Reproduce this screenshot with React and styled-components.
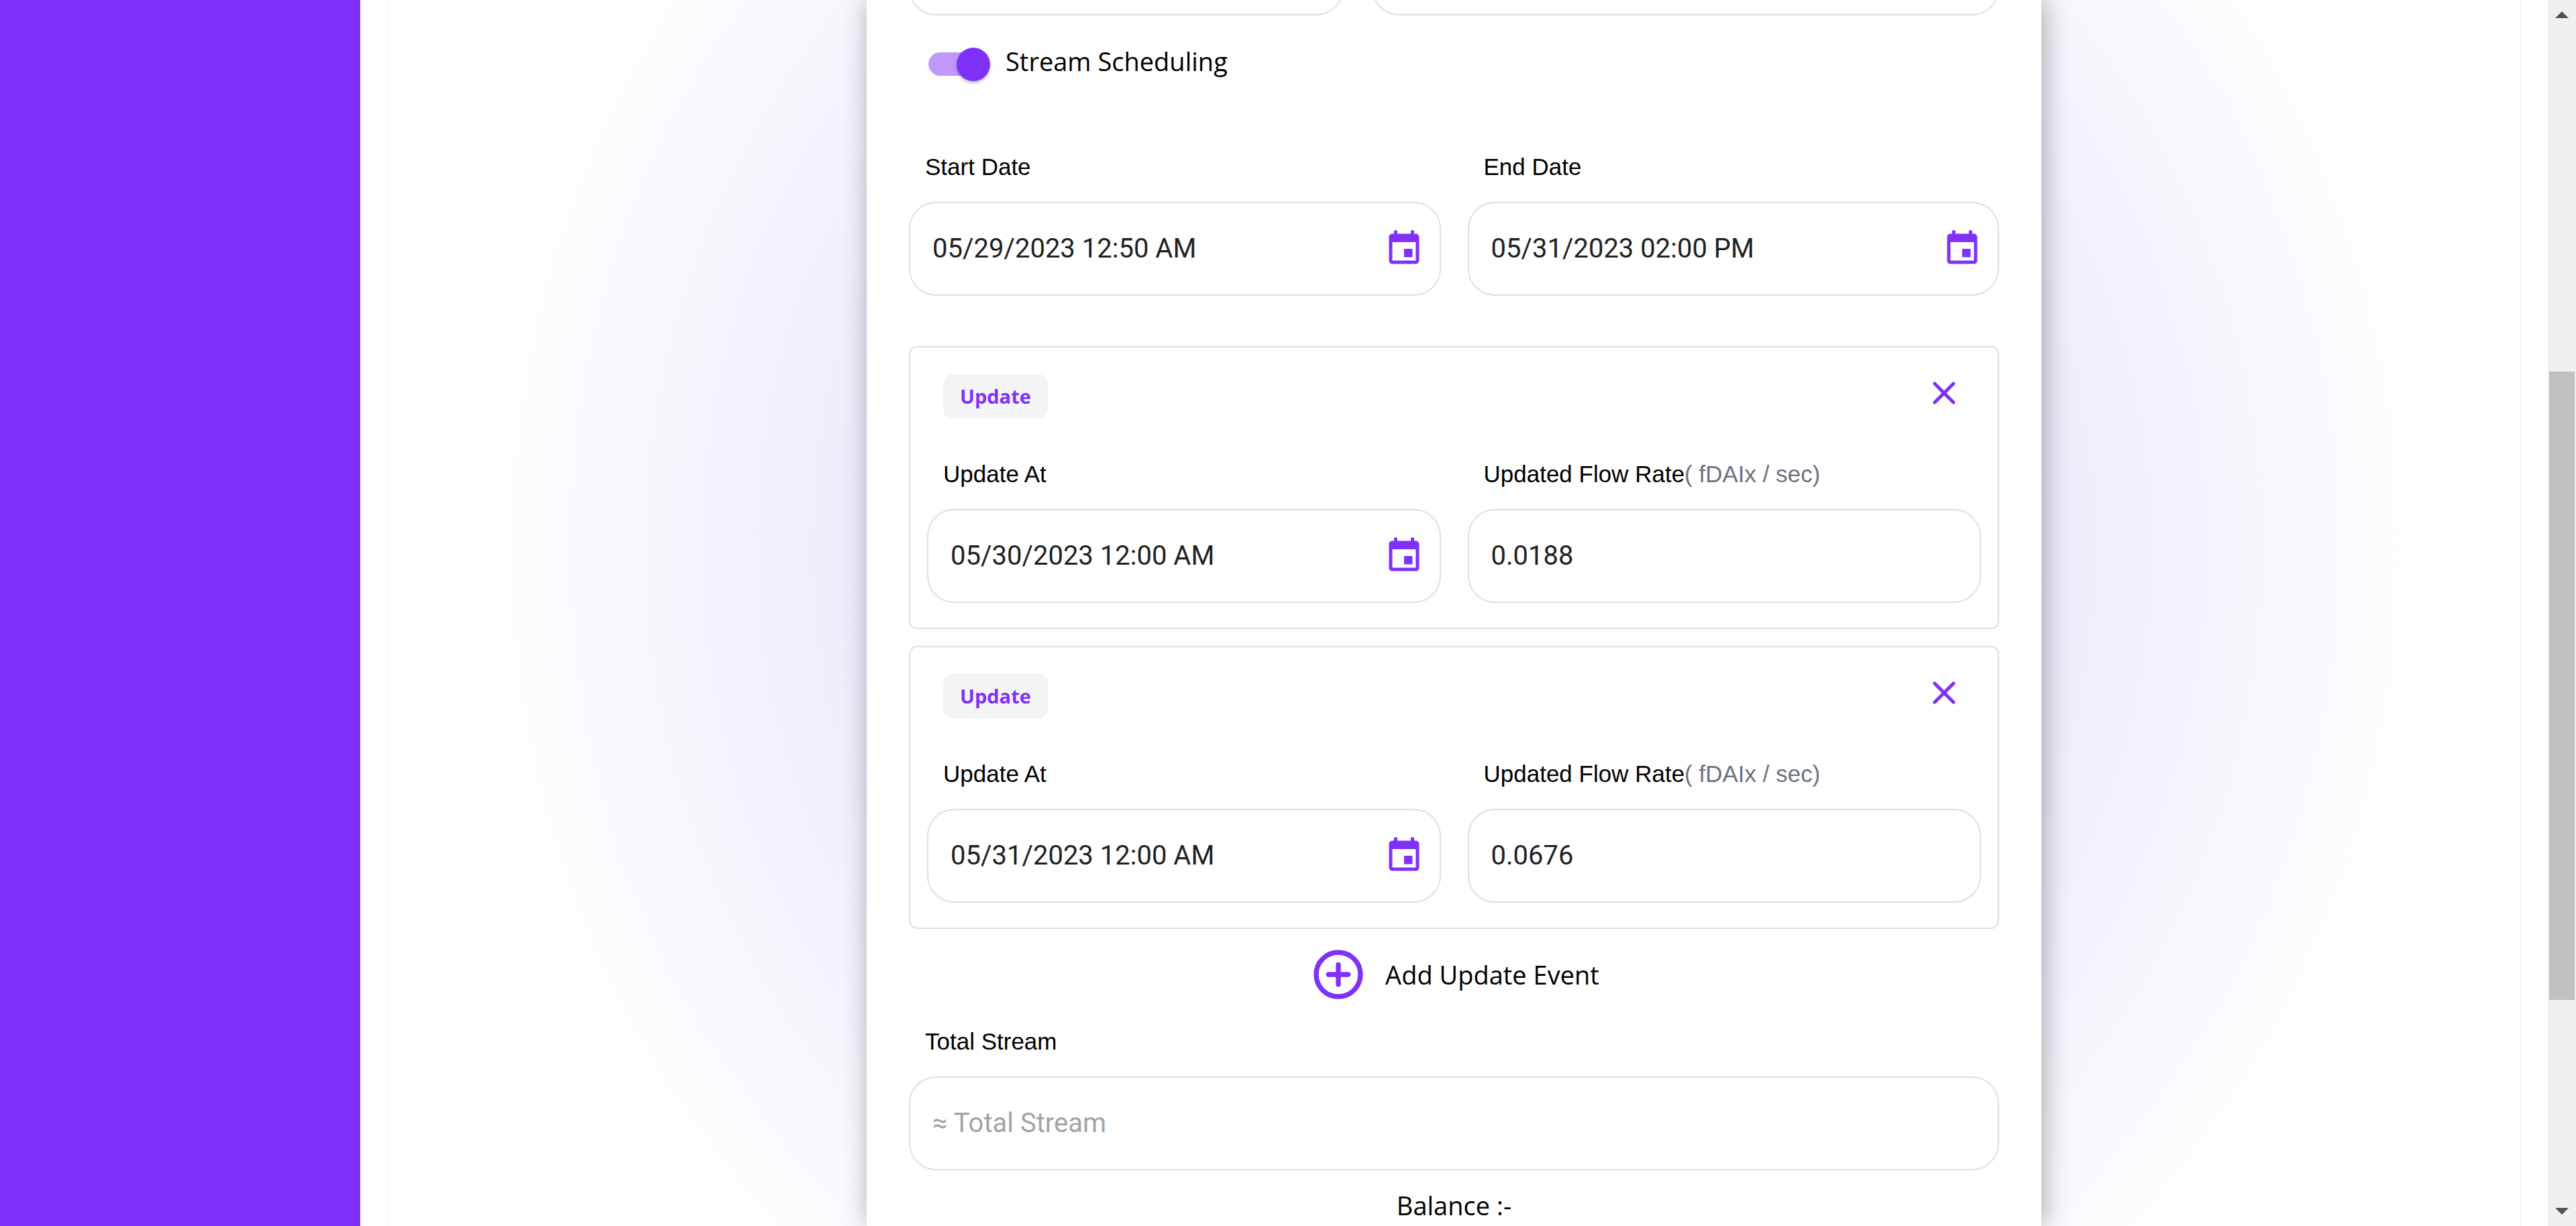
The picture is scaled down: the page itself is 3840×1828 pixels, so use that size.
import React from "react";
import styled, { createGlobalStyle } from "styled-components";

const purple = "#7f31fa";
const line = "#e0e0e0";
const sans = `"Open Sans", "Noto Sans", sans-serif`;

const GlobalStyle = createGlobalStyle`
  *, *::before, *::after { box-sizing: border-box; }
  html, body { margin: 0; background: #fff; }
  body { font-family: ${sans}; color: #000; }
  button, input { font: inherit; }
`;

const Page = styled.div`
  display: flex;
  height: 100vh;
  overflow: hidden;
`;

const Sidebar = styled.nav`
  flex: 0 0 537px;
  background: ${purple};
`;

const Main = styled.main`
  flex: 1;
  min-width: 0;
  display: flex;
  justify-content: center;
  margin: 0 40px;
  border: solid #f5f5f5;
  border-width: 0 2px;
  background: radial-gradient(47% 1540px at 50% 816px, #d4d4f7 0%, #ffffff 100%);
`;

const Card = styled.form`
  width: 100%;
  max-width: 1751px;
  display: flex;
  flex-direction: column;
  padding: 0 63px;
  background: #fff;
  box-shadow: 4px 0 38px rgba(0, 0, 0, 0.32);
`;

/* Lower edge of the row that is scrolled out above the viewport. */
const ScrolledRow = styled.div`
  display: grid;
  grid-template-columns: 648fr 934fr;
  grid-template-rows: 23px;
  gap: 42px;
  align-items: end;
  height: 23px;
`;

const Columns = styled.div`
  display: grid;
  grid-template-columns: 1fr 1fr;
  gap: 40px;
`;

const Body = styled.span`
  font-size: 38px;
  line-height: 40px;
`;

const SwitchRow = styled.label`
  display: flex;
  align-items: flex-start;
  gap: 23px;
  margin: 48px 0 108px;
  padding-left: 29px;
`;

const Switch = styled.input`
  appearance: none;
  position: relative;
  width: 92px;
  height: 50px;
  margin: 0;

  &::before {
    content: "";
    position: absolute;
    top: 7px;
    left: 0;
    width: 85px;
    height: 35px;
    border-radius: 18px;
    background: ${purple};
    opacity: 0.5;
  }

  &::after {
    content: "";
    position: absolute;
    top: 0;
    right: 0;
    width: 50px;
    height: 50px;
    border-radius: 50%;
    background: ${purple};
    box-shadow: 0 3px 4px rgba(0, 0, 0, 0.25);
  }
`;

const FieldBox = styled.div`
  display: flex;
  flex-direction: column;
  gap: 32px;
  min-width: 0;
`;

const FieldLabel = styled.label`
  padding-left: 24px;
  font-family: "Liberation Sans", Arial, sans-serif;
  font-size: 35px;
  line-height: 40px;
`;

const Unit = styled.span`
  color: #6b7280;
`;

const InputShell = styled.div`
  display: flex;
  align-items: center;
  height: 140px;
  padding: 0 23px 0 33px;
  border: 2px solid ${line};
  border-radius: 40px;
  background: #fff;
`;

const TextInput = styled.input`
  flex: 1;
  min-width: 0;
  width: 100%;
  padding: 0;
  border: 0;
  outline: 0;
  background: transparent;
  color: #212121;
  font-family: Roboto, sans-serif;
  font-size: 40px;
  line-height: 58px;

  &::placeholder {
    color: #a3a3a3;
    opacity: 1;
  }
`;

const IconButton = styled.button`
  display: flex;
  flex: none;
  padding: 0;
  border: 0;
  background: none;
  color: ${purple};
`;

const Events = styled.div`
  display: flex;
  flex-direction: column;
  gap: 25px;
  margin: 75px 0 24px;
`;

const EventCard = styled.section`
  padding: 40px 25px 37px;
  border: 2px solid ${line};
  border-radius: 12px;
`;

const EventHeader = styled.header`
  display: flex;
  align-items: flex-start;
  justify-content: space-between;
  margin-bottom: 63px;
  padding: 0 27px 0 24px;
`;

const Badge = styled.span`
  padding: 13px 25px;
  border-radius: 14px;
  background: #f3f4f6;
  color: ${purple};
  font-size: 29px;
  font-weight: 700;
  line-height: 40px;
`;

const AddButton = styled.button`
  display: flex;
  align-items: center;
  align-self: center;
  gap: 26px;
  margin-bottom: 36px;
  padding: 0;
  border: 0;
  background: none;
  color: #000;

  svg {
    color: ${purple};
  }
`;

const Balance = styled(Body).attrs({ as: "p" })`
  margin: 32px 0 0;
  text-align: center;
`;

const Scrollbar = styled.div`
  flex: 0 0 42px;
  display: grid;
  grid-template-rows: 42px 512fr 937fr 295fr 42px;
  background: #f0f0f0;
`;

const Thumb = styled.div`
  grid-row: 3;
  margin: 0 2px;
  background: #c1c1c1;
`;

const Arrow = styled.svg`
  grid-row: ${(p) => (p.$down ? 5 : 1)};
  display: block;
  width: 42px;
  height: 42px;
  fill: #505050;
`;

const CalendarIcon = () => (
  <svg width="60" height="60" viewBox="0 0 24 24" fill="currentColor" aria-hidden="true">
    <path d="M17 12h-5v5h5v-5zM16 1v2H8V1H6v2H5c-1.11 0-1.99.9-1.99 2L3 19c0 1.1.89 2 2 2h14c1.1 0 2-.9 2-2V5c0-1.1-.9-2-2-2h-1V1h-2zm3 18H5V8h14v11z" />
  </svg>
);

const CloseIcon = () => (
  <svg width="56" height="56" viewBox="0 0 24 24" fill="none" stroke="currentColor" strokeWidth="2.2" strokeLinecap="round" aria-hidden="true">
    <path d="M6 6l12 12M18 6L6 18" />
  </svg>
);

const PlusIcon = () => (
  <svg width="88" height="88" viewBox="0 0 24 24" fill="none" stroke="currentColor" strokeWidth="2" strokeLinecap="round" aria-hidden="true">
    <circle cx="12" cy="12" r="9" />
    <path d="M8 12h8M12 8v8" />
  </svg>
);

function Field({ id, label, unit, date, ...input }) {
  return (
    <FieldBox>
      <FieldLabel htmlFor={id}>
        {label}
        {unit && <Unit>{unit}</Unit>}
      </FieldLabel>
      <InputShell>
        <TextInput id={id} type="text" {...input} />
        {date && (
          <IconButton type="button" aria-label="Choose date">
            <CalendarIcon />
          </IconButton>
        )}
      </InputShell>
    </FieldBox>
  );
}

const events = [
  { at: "05/30/2023 12:00 AM", rate: "0.0188" },
  { at: "05/31/2023 12:00 AM", rate: "0.0676" },
];

export default function App() {
  return (
    <>
      <GlobalStyle />
      <Page>
        <Sidebar />
        <Main>
          <Card>
            <ScrolledRow>
              <InputShell />
              <InputShell />
            </ScrolledRow>
            <SwitchRow>
              <Switch type="checkbox" role="switch" defaultChecked />
              <Body>Stream Scheduling</Body>
            </SwitchRow>
            <Columns>
              <Field id="start" label="Start Date" date defaultValue="05/29/2023 12:50 AM" />
              <Field id="end" label="End Date" date defaultValue="05/31/2023 02:00 PM" />
            </Columns>
            <Events>
              {events.map((event, i) => (
                <EventCard key={event.at}>
                  <EventHeader>
                    <Badge>Update</Badge>
                    <IconButton type="button" aria-label="Remove update">
                      <CloseIcon />
                    </IconButton>
                  </EventHeader>
                  <Columns>
                    <Field id={`at-${i}`} label="Update At" date defaultValue={event.at} />
                    <Field
                      id={`rate-${i}`}
                      label="Updated Flow Rate"
                      unit="( fDAIx / sec)"
                      defaultValue={event.rate}
                    />
                  </Columns>
                </EventCard>
              ))}
            </Events>
            <AddButton type="button">
              <PlusIcon />
              <Body>Add Update Event</Body>
            </AddButton>
            <Field id="total" label="Total Stream" placeholder="≈ Total Stream" />
            <Balance>Balance :-</Balance>
          </Card>
        </Main>
        <Scrollbar aria-hidden="true">
          <Arrow viewBox="0 0 42 42">
            <path d="M21 17l10 10H11z" />
          </Arrow>
          <Thumb />
          <Arrow viewBox="0 0 42 42" $down>
            <path d="M11 15h20L21 25z" />
          </Arrow>
        </Scrollbar>
      </Page>
    </>
  );
}
